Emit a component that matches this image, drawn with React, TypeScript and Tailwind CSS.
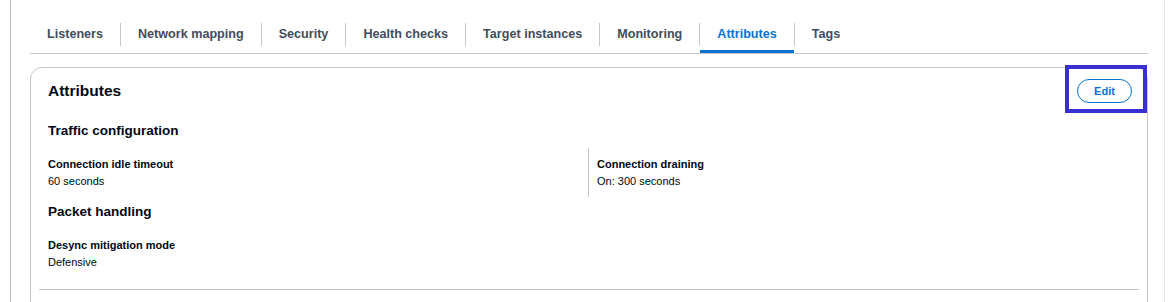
import React from "react"

const tabs = [
  "Listeners",
  "Network mapping",
  "Security",
  "Health checks",
  "Target instances",
  "Monitoring",
  "Attributes",
  "Tags",
]

const activeTab = "Attributes"

function Field({ label, value }: { label: string; value: string }) {
  return (
    <div className="pt-[8px] pb-[8px]">
      <div className="text-[11px] leading-[16px] font-bold text-[#000716]">{label}</div>
      <div className="mt-[1px] text-[11px] leading-[16px] text-[#000716]">{value}</div>
    </div>
  )
}

export default function App() {
  return (
    <div className="h-[302px] overflow-hidden bg-white font-['Liberation_Sans',Arial,sans-serif]">
      <div className="ml-[10px] w-[1155px] h-full border-l border-r border-l-[#b9b9c0] border-r-[#e6e6ea] pl-[19px] pr-[16px]">
        {/* tab strip */}
        <div className="flex items-start pt-[13px] border-b border-[#c6c6cd]">
          {tabs.map((tab, i) => (
            <React.Fragment key={tab}>
              {i > 0 && <div className="mt-[10px] h-[23px] w-px bg-[#c6c6cd]" />}
              <div
                className={
                  tab === activeTab
                    ? "flex items-center h-[40px] pt-[6px] px-[17px] border-b-[3px] border-[#0972d3] text-[12.6px] font-bold text-[#0972d3]"
                    : "flex items-center h-[40px] pt-[6px] px-[17px] border-b-[3px] border-transparent text-[12.6px] font-bold text-[#414d5c]"
                }
              >
                {tab}
              </div>
            </React.Fragment>
          ))}
        </div>

        {/* attributes card */}
        <div className="mt-[13px] rounded-[12px] border border-[#c6c6cd] pb-[40px]">
          <div className="flex items-center justify-between pt-[10px] pl-[17px] pr-[15px]">
            <h2 className="text-[15.5px] leading-[20px] font-bold text-[#000716]">Attributes</h2>
            <div className="relative">
              <button className="h-[24px] w-[55px] rounded-full border-[1.5px] border-[#0972d3] text-[11px] font-bold text-[#0972d3]">
                Edit
              </button>
              <span className="pointer-events-none absolute -left-[12px] -right-[15px] -top-[13px] -bottom-[10px] border-4 border-[#3a2fd2]" />
            </div>
          </div>

          <div className="pl-[17px] pr-[15px]">
            <h3 className="mt-[19px] text-[13.5px] leading-[18px] font-bold text-[#000716]">Traffic configuration</h3>
            <div className="mt-[8px] grid grid-cols-[540px_1fr]">
              <Field label="Connection idle timeout" value="60 seconds" />
              <div className="border-l border-[#c6c6cd] pl-[8px]">
                <Field label="Connection draining" value="On: 300 seconds" />
              </div>
            </div>

            <h3 className="mt-[6px] text-[13.5px] leading-[18px] font-bold text-[#000716]">Packet handling</h3>
            <div className="mt-[8px]">
              <Field label="Desync mitigation mode" value="Defensive" />
            </div>
          </div>

          <div className="mx-[8px] mt-[11px] h-px bg-[#c6c6cd]" />
        </div>
      </div>
    </div>
  )
}
